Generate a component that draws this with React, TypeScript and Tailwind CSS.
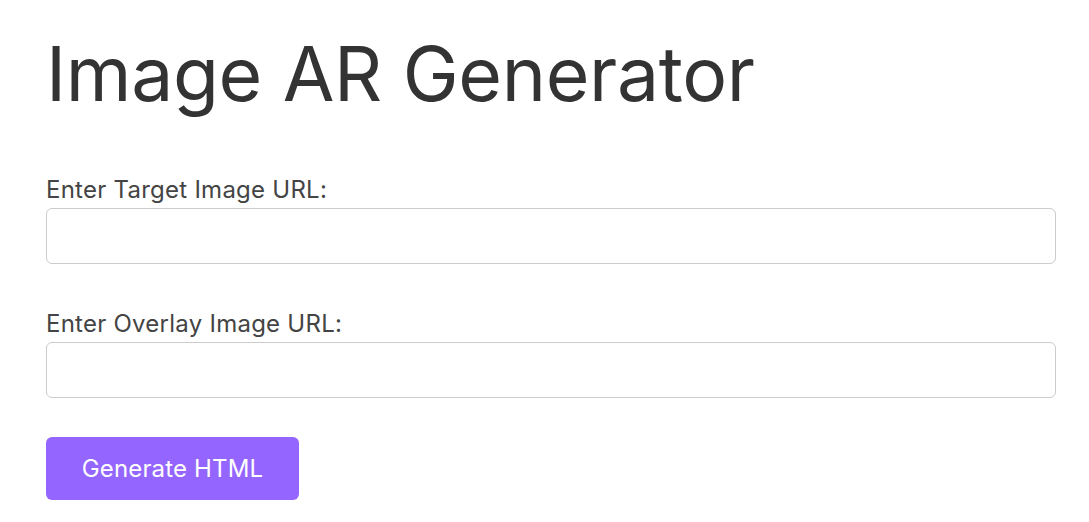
export default function App() {
  return (
    <div className="min-h-screen bg-white text-[#333] pl-[46px] pt-[29px]" style={{ fontFamily: 'Inter, "Noto Sans", sans-serif' }}>
      <h1 className="text-[75px] leading-[90px] font-normal m-0 tracking-[-0.35px]">Image AR Generator</h1>
      <div className="mt-[56px]">
        <label className="block text-[24px] leading-[29px] text-[#444] tracking-[0.25px]">Enter Target Image URL:</label>
        <input type="text" className="block mt-[4px] w-[1010px] h-[56px] border border-[#ccc] rounded-[6px] outline-none" />
      </div>
      <div className="mt-[45px]">
        <label className="block text-[24px] leading-[29px] text-[#444] tracking-[0.25px]">Enter Overlay Image URL:</label>
        <input type="text" className="block mt-[4px] w-[1010px] h-[56px] border border-[#ccc] rounded-[6px] outline-none" />
      </div>
      <button className="block mt-[39px] w-[253px] h-[63px] bg-[#9466ff] text-white text-[24px] tracking-[0.15px] rounded-[6px]">Generate HTML</button>
    </div>
  );
}
